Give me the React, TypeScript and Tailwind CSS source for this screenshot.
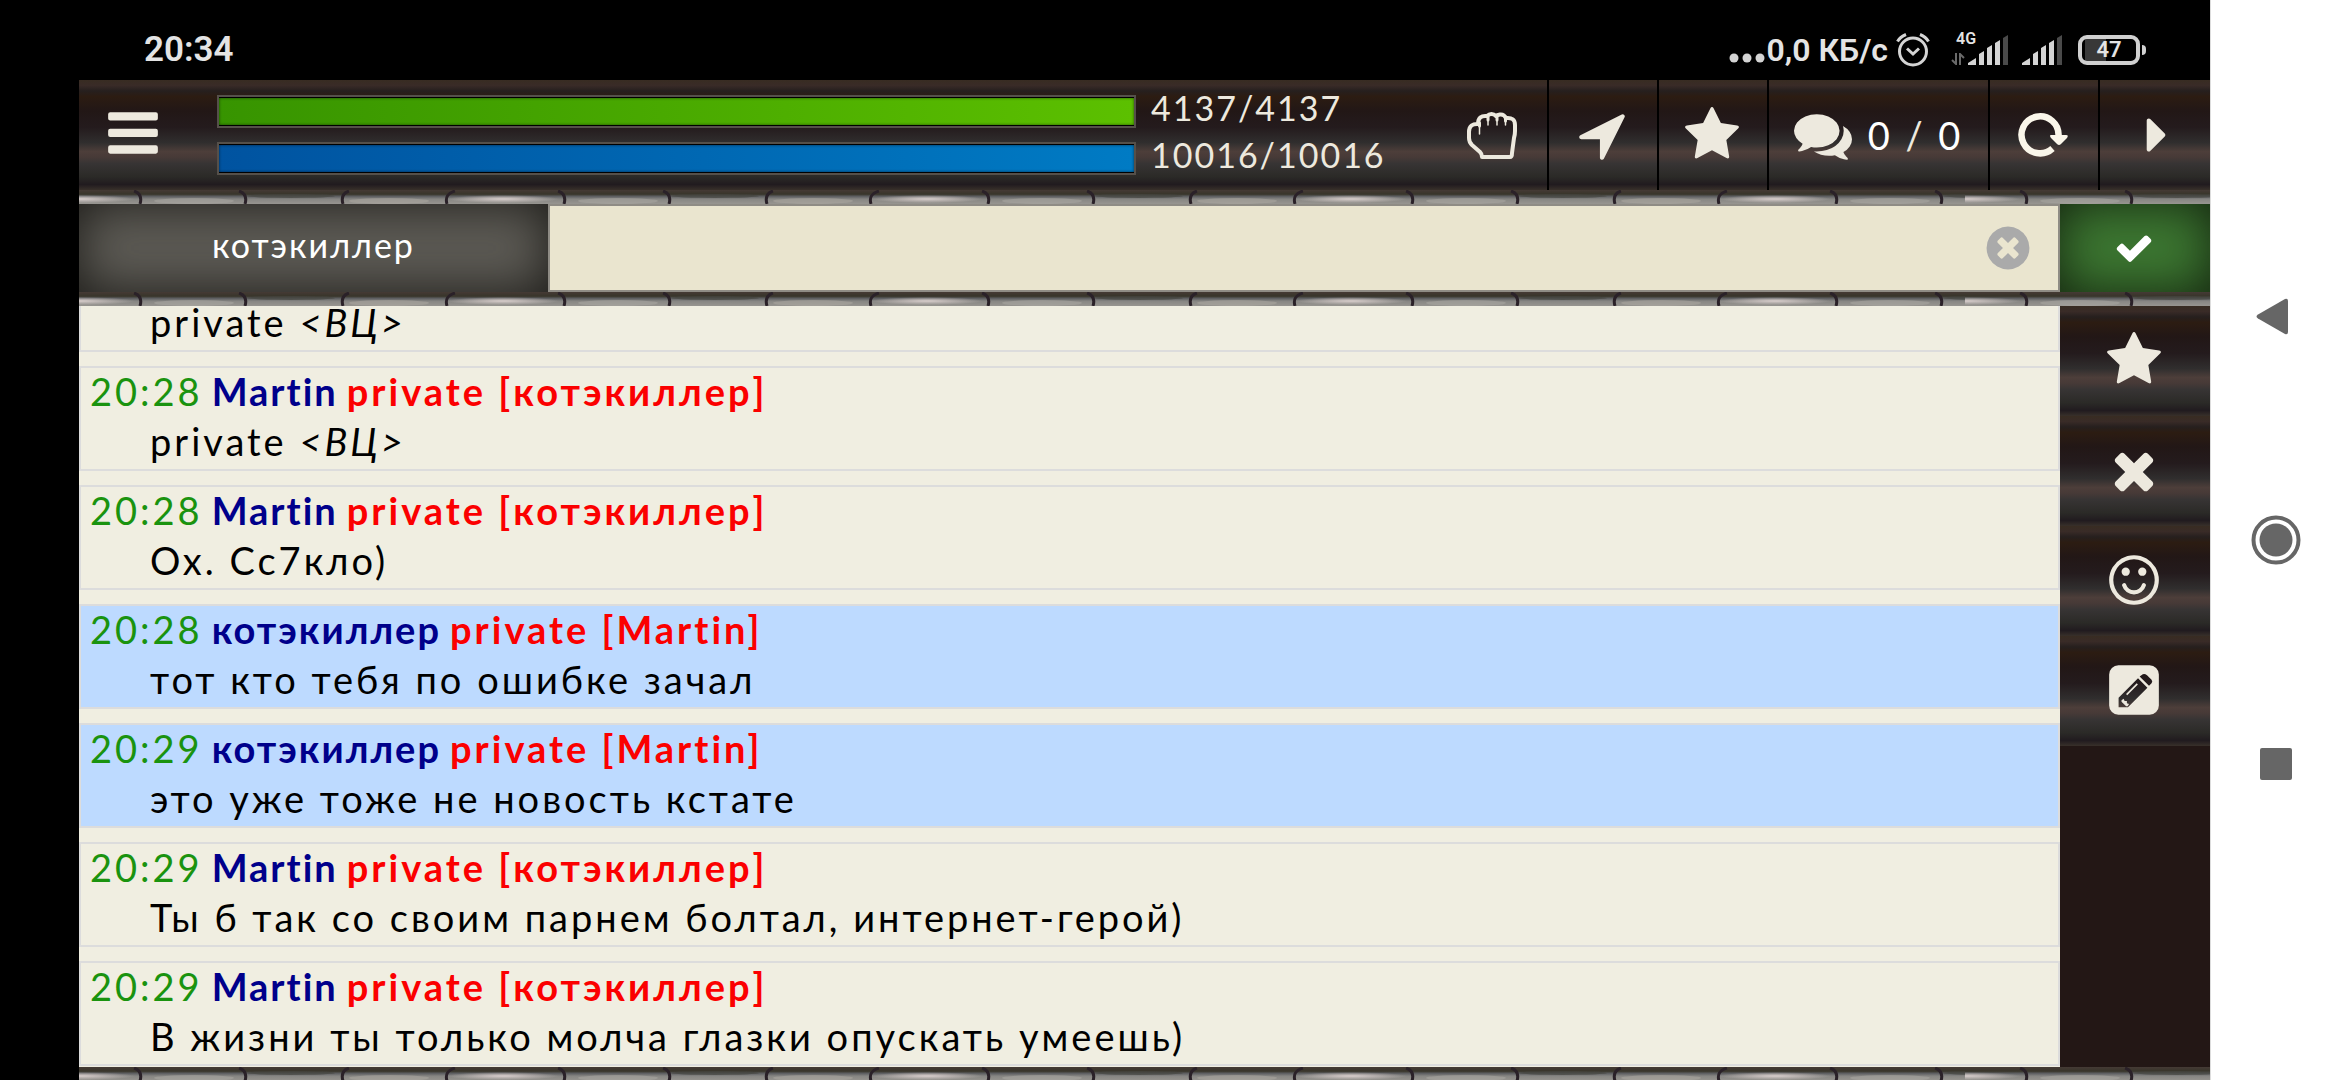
import { ReactNode } from "react";
import clsx from "clsx";

type IconProps = { d: string; className?: string };

const Icon = ({ d, className }: IconProps) => (
  <svg viewBox="0 0 1792 1792" fill="currentColor" aria-hidden="true" className={clsx("shrink-0", className ?? "size-[58px]")}>
    <path fillRule="evenodd" d={d} />
  </svg>
);

const icons = {
  bars: "M192 1216h1408q64 0 64 64v128q0 64-64 64h-1408q-64 0-64-64v-128q0-64 64-64zM192 704h1408q64 0 64 64v128q0 64-64 64h-1408q-64 0-64-64v-128q0-64 64-64zM192 192h1408q64 0 64 64v128q0 64-64 64h-1408q-64 0-64-64v-128q0-64 64-64z",
  arrow:
    "M1593 349l-640 1280q-17 35-57 35-5 0-15-2-22-5-35.500-22.500t-13.500-39.500v-576h-576q-22 0-39.500-13.500t-22.500-35.500 4-42 29-30l1280-640q13-7 29-7 27 0 45 19 15 14 18.500 34.500t-6.500 39.500z",
  star: "M1728 647q0 22-26 48l-363 354 86 500q1 7 1 20 0 21-10.500 35.500t-30.500 14.500q-19 0-40-12l-449-236-449 236q-22 12-40 12-21 0-31.500-14.500t-10.500-35.500q0-6 2-20l86-500-364-354q-25-27-25-48 0-37 56-46l502-73 225-455q19-41 49-41t49 41l225 455 502 73q56 9 56 46z",
  comments:
    "M1408 768q0 139-94 257t-256.500 186.500-353.500 68.500q-86 0-176-16-124 88-278 128-36 9-86 16h-3q-11 0-20.500-8t-11.500-21q-1-3-1-6.500t.5-6.500 2-6l2.500-5 3.500-5.500 4-5 4.500-5 4-4.500q5-6 23-25t26-29.500 22.500-29 25-38.500 20.500-44q-124-72-195-177t-71-224q0-139 94-257t256.500-186.500 353.500-68.500 353.500 68.500 256.500 186.500 94 257zm384 256q0 120-71 224.500t-195 176.500q10 24 20.500 44t25 38.500 22.500 29 26 29.500 23 25q1 1 4 4.500t4.500 5 4 5 3.500 5.500l2.500 5 2 6 .5 6.500-1 6.500q-3 14-13 22t-22 7q-50-7-86-16-154-40-278-128-90 16-176 16-271 0-472-132 58 4 88 4 161 0 309-45t264-129q125-92 192-212t67-254q0-77-23-152 129 71 204 178t75 230z",
  caret: "M1216 896q0 26-19 45l-448 448q-19 19-45 19t-45-19-19-45v-896q0-26 19-45t45-19 45 19l448 448q19 19 19 45z",
  clear:
    "M1277 1122q0-26-19-45l-181-181 181-181q19-19 19-45 0-27-19-46l-90-90q-19-19-46-19-26 0-45 19l-181 181-181-181q-19-19-45-19-27 0-46 19l-90 90q-19 19-19 46 0 26 19 45l181 181-181 181q-19 19-19 45 0 27 19 46l90 90q19 19 46 19 26 0 45-19l181-181 181 181q19 19 45 19 27 0 46-19l90-90q19-19 19-46zm387-226q0 209-103 385.500t-279.500 279.500-385.500 103-385.500-103-279.500-279.500-103-385.500 103-385.500 279.500-279.500 385.500-103 385.500 103 279.500 279.500 103 385.500z",
  check:
    "M1671 566q0 40-28 68l-724 724-136 136q-28 28-68 28t-68-28l-136-136-362-362q-28-28-28-68t28-68l136-136q28-28 68-28t68 28l294 295 656-657q28-28 68-28t68 28l136 136q28 28 28 68z",
  times:
    "M1490 1322q0 40-28 68l-136 136q-28 28-68 28t-68-28l-294-294-294 294q-28 28-68 28t-68-28l-136-136q-28-28-28-68t28-68l294-294-294-294q-28-28-28-68t28-68l136-136q28-28 68-28t68 28l294 294 294-294q28-28 68-28t68 28l136 136q28 28 28 68t-28 68l-294 294 294 294q28 28 28 68z",
  smile:
    "M1262 1075q-37 121-138 195t-228 74-228-74-138-195q-8-25 4-48.500t38-31.500q25-8 48.500 4t31.500 38q25 80 92.500 129.500t151.500 49.500 151.500-49.500 92.500-129.500q8-26 32-38t49-4 37 31.500 4 48.500zm-494-435q0 53-37.500 90.500t-90.500 37.500-90.500-37.500-37.500-90.500 37.500-90.500 90.500-37.500 90.500 37.500 37.500 90.500zm512 0q0 53-37.500 90.500t-90.500 37.500-90.500-37.500-37.500-90.500 37.500-90.500 90.500-37.500 90.500 37.500 37.500 90.500zm256 256q0-130-51-248.500t-136.500-204-204-136.500-248.500-51-248.500 51-204 136.500-136.500 204-51 248.500 51 248.500 136.500 204 204 136.500 248.500 51 248.500-51 204-136.500 136.500-204 51-248.500zm128 0q0 209-103 385.500t-279.500 279.500-385.500 103-385.500-103-279.500-279.500-103-385.500 103-385.500 279.500-279.500 385.500-103 385.500 103 279.500 279.500 103 385.500z",
  pencil:
    "M416 128h960q119 0 203.500 84.500t84.500 203.500v960q0 119-84.500 203.500t-203.500 84.500h-960q-119 0-203.500-84.500t-84.500-203.500v-960q0-119 84.500-203.500t203.500-84.500zM1020 536l-600 600v290h290l600-600zM1070 476l290 290 78-78q44-50 0-110l-140-140q-70-56-130-30zM510 1210l66-44 30 66h70v70l66 30-44 66h-46l-142-142zM980 690l36 36-330 330-36-36z",
};

const Hand = () => (
  <svg viewBox="0 0 50 47" fill="none" stroke="currentColor" strokeLinejoin="round" className="w-[50px] shrink-0" aria-hidden="true">
    <path
      strokeWidth="4"
      d="M12 12q-10-1-10 8v6q0 4 3 7l8 7q2 2 2 5h28q2 0 2-4l2-15q1-3 1-7V13q0-8-9-7-2-4-6-3.500-3 .5-4 1.500-2-2-4.500-2T20 4q-9-1-9 8z"
    />
    <path strokeWidth="1.500" strokeLinecap="round" d="M12.500 9v13M21 5v8M30 5v8M38.500 6v7" />
    <path strokeWidth="3" strokeLinecap="round" d="M12.500 11v3M21 4v4M30 4v4M38.500 6v3" />
  </svg>
);

const Refresh = () => (
  <svg viewBox="0 0 50 44" className="w-[50px] shrink-0 text-[#faf6ea]" aria-hidden="true">
    <path fill="none" stroke="currentColor" strokeWidth="6.500" d="M34.500 35.500A18.500 18.500 0 1 1 40.500 23" />
    <path fill="currentColor" d="M33 22h15q3 0 1 3l-6 6q-2 2-4 0l-6-6q-2-3 0-3z" />
  </svg>
);

// strip of paving stones between the panels
const Stones = () => (
  <svg className="h-[14px] w-full shrink-0" aria-hidden="true">
    <defs>
      <linearGradient id="stone" x1="0" y1="0" x2="0" y2="1">
        <stop offset="0" stopColor="#453a35" />
        <stop offset=".3" stopColor="#38352a" />
        <stop offset=".45" stopColor="#5c5d60" />
        <stop offset=".65" stopColor="#878683" />
        <stop offset="1" stopColor="#979590" />
      </linearGradient>
      <radialGradient id="shine">
        <stop offset="0" stopColor="#d8cecc" />
        <stop offset="1" stopColor="#d8cecc" stopOpacity="0" />
      </radialGradient>
      <pattern id="stones" width="424" height="14" patternUnits="userSpaceOnUse">
        <rect width="424" height="14" fill="url(#stone)" />
        <ellipse cx="0" cy="9" rx="56" ry="4" fill="url(#shine)" />
        <ellipse cx="424" cy="9" rx="56" ry="4" fill="url(#shine)" />
        <ellipse cx="115" cy="11" rx="40" ry="3" fill="#aeaca6" fillOpacity=".5" />
        <ellipse cx="212" cy="6" rx="44" ry="2" fill="#45443f" fillOpacity=".7" />
        <ellipse cx="310" cy="11" rx="40" ry="3" fill="#b0aca4" fillOpacity=".5" />
        <path fill="none" stroke="#2a2128" strokeWidth="3" d="M55 1q9 3 6 13M160 1q9 3 6 13M270 1q-9 3-6 13M376 1q-11 3-8 13" />
      </pattern>
    </defs>
    <rect width="1886" height="14" fill="url(#stones)" />
    <svg x="1886">
      <rect width="100%" height="14" fill="url(#stones)" />
    </svg>
  </svg>
);

const wood =
  "bg-[linear-gradient(to_bottom,#382c22_0%,#392b27_5%,#261f1e_10%,#2c1c12_15%,#221716_28%,#241b1d_43%,#302e2e_57%,#4d3e3a_65%,#473a37_70%,#373434_76%,#2b2a27_88%,#211b1f_95%,#38302a_100%)]";

const ToolButton = ({ label, children, className }: { label: string; children: ReactNode; className?: string }) => (
  <button aria-label={label} className={clsx("flex shrink-0 items-center justify-center border-r-2 border-black", className ?? "w-[110px] pr-0.5")}>
    {children}
  </button>
);

const Meter = ({ label, value, max, fill }: { label: string; value: number; max: number; fill: string }) => (
  <div
    role="meter"
    aria-label={label}
    aria-valuenow={value}
    aria-valuemax={max}
    className="h-[33px] border-2 border-[#55504a] bg-black py-px"
  >
    <div className={clsx("h-full shadow-[inset_0_0_3px_rgba(0,0,0,0.6)]", fill)} style={{ width: `${(value / max) * 100}%` }} />
  </div>
);

const Signal = () => (
  <svg viewBox="0 0 40 30" className="w-10" aria-hidden="true">
    <path fill="#d4d4d4" d="M0 30v-2l8-5v7zM11 30V19l5-3v14zM19 30V13l5-3v20zM27 30V8l5-3v25z" />
    <path fill="#4a4a4a" d="M35 30V3l5-3v30z" />
  </svg>
);

const StatusBar = () => (
  <header className="flex h-20 shrink-0 items-center bg-black pt-5 pr-16 pl-[65px] font-[Roboto,sans-serif] text-[#e4e4e4]">
    <span className="text-[35px] font-semibold">20:34</span>
    <div className="ml-auto flex items-center">
      <svg viewBox="0 0 36 30" className="w-9" fill="#d4d4d4" aria-hidden="true">
        <circle cx="5" cy="23" r="4.500" />
        <circle cx="18" cy="23" r="4.500" />
        <circle cx="31" cy="23" r="4.500" />
      </svg>
      <span className="ml-px text-[32px] font-semibold">0,0 КБ/с</span>
      <svg viewBox="0 0 34 34" fill="none" stroke="#d4d4d4" strokeWidth="3" className="ml-2 w-[34px]" aria-hidden="true">
        <circle cx="17" cy="18.500" r="13.500" />
        <path d="M11 15.500l6 5.500 6-5.500M1.500 8.500Q4 4 10 1.500M32.500 8.500Q30 4 24 1.500" />
      </svg>
      <div className="relative ml-[38px] flex">
        <Signal />
        <span className="absolute -top-[6px] -left-3 text-[16px] leading-5 font-semibold">4G</span>
        <svg viewBox="0 0 14 12" className="absolute bottom-0 -left-[17px] w-[14px]" fill="none" stroke="#6a6a6a" strokeWidth="2" aria-hidden="true">
          <path d="M5 0v11L1 7M9 12V1l4 4" />
        </svg>
      </div>
      <div className="ml-[14px] flex">
        <Signal />
      </div>
      <div className="ml-4 flex items-center">
        <div className="flex h-[30px] w-[62px] items-center justify-center rounded-[9px] border-4 border-[#d0d0d0] bg-[linear-gradient(to_right,#000_3px,#383838_3px,#383838_24px,#000_24px)] text-[22px] leading-none font-semibold">
          47
        </div>
        <div className="ml-0.5 h-[10px] w-1 rounded-r-sm bg-[#d0d0d0]" />
      </div>
    </div>
  </header>
);

const Toolbar = () => (
  <div className={clsx("flex h-[110px] shrink-0 text-[#ede9de]", wood)}>
    <button aria-label="Меню" className="flex w-[138px] shrink-0 items-center pl-[25px]">
      <Icon d={icons.bars} />
    </button>
    <div className="flex flex-1 flex-col justify-center gap-[14px]">
      <Meter label="Здоровье" value={4137} max={4137} fill="bg-linear-to-r from-[#379400] to-[#5cc000]" />
      <Meter label="Мана" value={10016} max={10016} fill="bg-linear-to-r from-[#0053a0] to-[#007bc4]" />
    </div>
    <div className="flex w-[303px] shrink-0 flex-col justify-center pb-2 pl-[15px] text-[34px] leading-[47px] tracking-[2px]">
      <span>4137/4137</span>
      <span>10016/10016</span>
    </div>
    <ToolButton label="Действие">
      <Hand />
    </ToolButton>
    <ToolButton label="Карта">
      <Icon d={icons.arrow} />
    </ToolButton>
    <ToolButton label="Избранное">
      <Icon d={icons.star} />
    </ToolButton>
    <ToolButton label="Сообщения" className="w-[221px] gap-4">
      <Icon d={icons.comments} />
      <span className="text-[38px]">
        <span className="text-white">0</span> / <span className="text-white">0</span>
      </span>
    </ToolButton>
    <ToolButton label="Обновить">
      <Refresh />
    </ToolButton>
    <button aria-label="Ещё" className="flex w-[110px] shrink-0 items-center justify-center">
      <Icon d={icons.caret} />
    </button>
  </div>
);

const InputRow = () => (
  <form className="flex h-[88px] shrink-0">
    <button
      type="button"
      className="w-[22%] bg-[#5d5b55] pb-2 text-[34px] tracking-[2px] text-white shadow-[inset_0_0_50px_#1c1b18]"
    >
      котэкиллер
    </button>
    <div className="flex flex-1 items-center border-2 border-[#8f8c85] bg-[#eae5cf] pr-[25px]">
      <input aria-label="Сообщение" className="h-full flex-1 bg-transparent px-4 text-[38px] outline-none" />
      <button type="reset" aria-label="Очистить" className="text-[#aaaaaa]">
        <Icon d={icons.clear} className="size-[50px]" />
      </button>
    </div>
    <button
      type="submit"
      aria-label="Отправить"
      className="flex w-[150px] shrink-0 items-center justify-center bg-[#3d7832] pr-0.5 text-white shadow-[inset_0_0_50px_#14240f]"
    >
      <Icon d={icons.check} className="size-10" />
    </button>
  </form>
);

type Message = {
  text: ReactNode;
  own?: boolean;
  head?: { time: string; from: string; to: string };
};

const tag = (
  <>
    private <i>&lt;ВЦ&gt;</i>
  </>
);

const messages: Message[] = [
  { text: tag },
  { head: { time: "20:28", from: "Martin", to: "котэкиллер" }, text: tag },
  { head: { time: "20:28", from: "Martin", to: "котэкиллер" }, text: "Ох. Сс7кло)" },
  { head: { time: "20:28", from: "котэкиллер", to: "Martin" }, text: "тот кто тебя по ошибке зачал", own: true },
  { head: { time: "20:29", from: "котэкиллер", to: "Martin" }, text: "это уже тоже не новость кстате", own: true },
  { head: { time: "20:29", from: "Martin", to: "котэкиллер" }, text: "Ты б так со своим парнем болтал, интернет-герой)" },
  { head: { time: "20:29", from: "Martin", to: "котэкиллер" }, text: "В жизни ты только молча глазки опускать умеешь)" },
];

const Chat = () => (
  <ul className="flex flex-1 flex-col justify-end gap-[14px] overflow-hidden bg-[#f0eee1] pb-px text-[38px] leading-[46px] text-black">
    {messages.map(({ head, text, own }, i) => (
      <li key={i} className={clsx("shrink-0 border-2 border-[#dcdcdc] pb-[5px] pl-[9px]", own && "bg-[#bddaff]")}>
        {head && (
          <p className="flex gap-[9px]">
            <time className="text-[#1a930f]">{head.time}</time>
            <b className="tracking-[2px] text-[#00008b]">{head.from}</b>
            <b className="text-[#fb0000]">private [{head.to}]</b>
          </p>
        )}
        <p className="mt-1 pl-[60px]">{text}</p>
      </li>
    ))}
  </ul>
);

const sideButtons = [
  { label: "Избранное", icon: icons.star },
  { label: "Закрыть", icon: icons.times },
  { label: "Смайлы", icon: icons.smile },
  { label: "Написать", icon: icons.pencil },
];

const Sidebar = () => (
  <aside className="flex w-[150px] shrink-0 flex-col bg-[#231715] text-[#ede9de]">
    {sideButtons.map(({ label, icon }) => (
      <button key={label} aria-label={label} className={clsx("flex h-[110px] items-center justify-center pr-0.5 pb-0.5", wood)}>
        <Icon d={icon} />
      </button>
    ))}
  </aside>
);

const SystemNav = () => (
  <nav className="flex w-[130px] shrink-0 flex-col items-center justify-center gap-[174px] border-l border-[#dddddd] bg-white text-[#666666]">
    <button aria-label="Назад">
      <svg viewBox="0 0 50 50" className="size-[50px]" fill="currentColor">
        <path d="M7 23.500L34 8q3-1 3 2v31q0 3-3 2L7 27.500q-3-2 0-4z" />
      </svg>
    </button>
    <button aria-label="Домой">
      <svg viewBox="0 0 50 50" className="size-[50px]" fill="currentColor">
        <circle cx="25" cy="25" r="22.500" fill="none" stroke="currentColor" strokeWidth="4" />
        <circle cx="25" cy="25" r="16.500" />
      </svg>
    </button>
    <button aria-label="Недавние">
      <svg viewBox="0 0 50 50" className="size-[50px]" fill="currentColor">
        <rect x="9" y="9" width="32" height="32" rx="2" />
      </svg>
    </button>
  </nav>
);

export default function App() {
  return (
    <div className="flex h-screen bg-black pl-[79px] font-[Lato,'Noto_Sans',sans-serif]">
      <div className="flex min-w-0 flex-1 flex-col">
        <StatusBar />
        <main className="flex min-h-0 flex-1 flex-col tracking-[3px]">
          <Toolbar />
          <Stones />
          <InputRow />
          <Stones />
          <div className="flex min-h-0 flex-1">
            <Chat />
            <Sidebar />
          </div>
          <div className="flex h-[13px] shrink-0 overflow-hidden">
            <Stones />
          </div>
        </main>
      </div>
      <SystemNav />
    </div>
  );
}
